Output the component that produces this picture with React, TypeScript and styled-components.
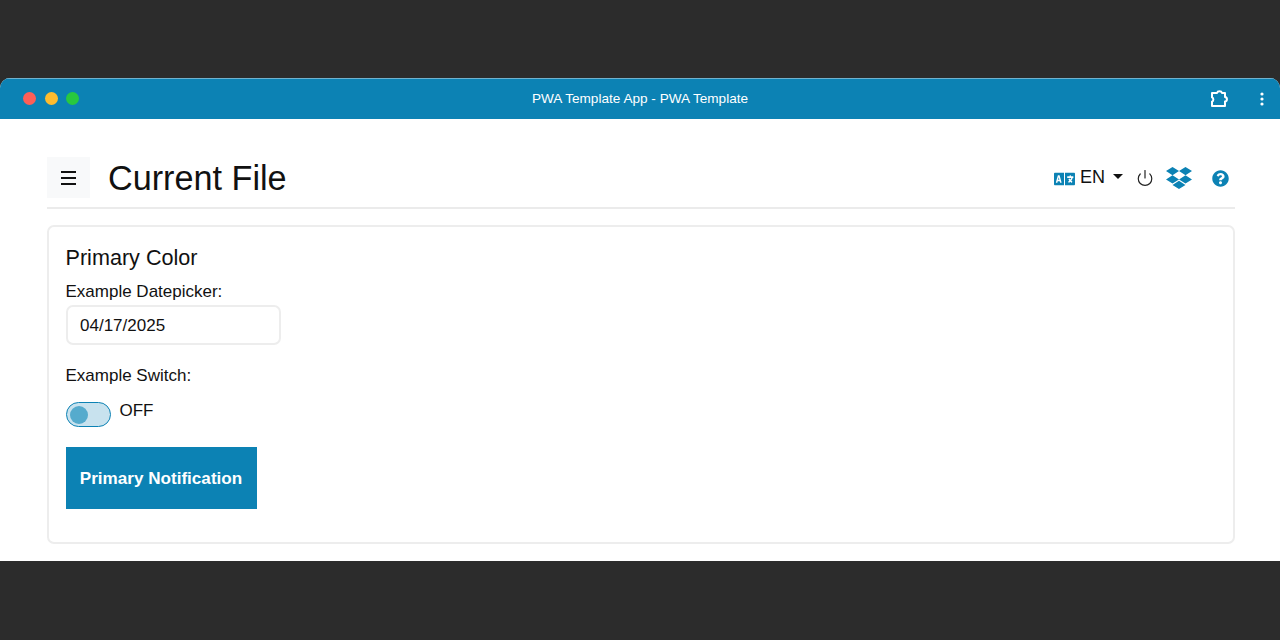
import styled, { createGlobalStyle } from "styled-components";
import { FaDropbox, FaLanguage, FaQuestionCircle } from "react-icons/fa";
import { Power } from "lucide-react";

const GlobalStyle = createGlobalStyle`
  html, body {
    margin: 0;
    padding: 0;
    height: 640px;
    overflow: hidden;
    background: #2c2c2c;
    font-family: "Liberation Sans", Arial, sans-serif;
    color: #111;
  }
  * { box-sizing: border-box; }
`;

const Page = styled.div`
  height: 640px;
  padding-top: 78px;
`;

const Window = styled.div`
  height: 483px;
  display: flex;
  flex-direction: column;
  background: #fff;
  border-radius: 10px 10px 0 0;
  overflow: hidden;
`;

const TitleBar = styled.div`
  height: 41px;
  flex: none;
  display: grid;
  grid-template-columns: 1fr auto 1fr;
  align-items: center;
  background: #0c82b4;
  border-top: 1px solid #6fb2cf;
  padding: 0 16px;
`;

const Lights = styled.div`
  display: flex;
  gap: 8.5px;
  margin: 0 0 2px 7px;
`;

const Light = styled.span<{ $color: string }>`
  width: 13px;
  height: 13px;
  border-radius: 50%;
  background: ${({ $color }) => $color};
`;

const WindowTitle = styled.div`
  color: #fff;
  font-size: 13.6px;
  margin-bottom: 2px;
`;

const BarActions = styled.div`
  justify-self: end;
  display: flex;
  align-items: center;
  gap: 31px;
  margin-bottom: 1px;
`;

const Content = styled.div`
  flex: 1;
  padding: 38px 45px 17px 47px;
  display: flex;
  flex-direction: column;
`;

const Header = styled.header`
  height: 52px;
  flex: none;
  display: flex;
  align-items: flex-start;
  border-bottom: 2px solid #ebebeb;
`;

const MenuButton = styled.button`
  width: 43px;
  height: 41px;
  border: none;
  background: #f8f9fa;
  display: flex;
  align-items: center;
  justify-content: center;
  padding: 0;
`;

const PageTitle = styled.h1`
  margin: 0 0 0 18px;
  font-size: 34.2px;
  line-height: 43px;
  font-weight: 400;
  flex: 1;
`;

const Tools = styled.div`
  display: flex;
  align-items: center;
  height: 41px;
  margin-right: 6px;
  color: #0c82b4;
`;

const LangIcon = styled(FaLanguage)`
  width: 21px;
  height: 20px;
  margin-top: 3px;
`;

const LangLabel = styled.span`
  font-size: 18px;
  color: #111;
  margin-left: 5px;
`;

const Caret = styled.span`
  width: 0;
  height: 0;
  margin: -2px 13px 0 8px;
  border-left: 5px solid transparent;
  border-right: 5px solid transparent;
  border-top: 5px solid #111;
`;

const PowerIcon = styled(Power)`
  color: #222;
`;

const DropboxIcon = styled(FaDropbox)`
  margin: 0 20px 0 12px;
`;

const HelpIcon = styled(FaQuestionCircle)`
  margin-top: 2px;
`;

const Card = styled.section`
  margin-top: 16px;
  flex: 1;
  border: 2px solid #ededed;
  border-radius: 7px;
  padding: 18px 16.5px 0;
`;

const CardTitle = styled.h2`
  margin: 0;
  font-size: 21.6px;
  line-height: 26px;
  font-weight: 400;
`;

const FieldLabel = styled.div`
  font-size: 17px;
  line-height: 20px;
  margin-top: 11px;
`;

const DateField = styled.div`
  width: 215px;
  height: 40px;
  margin-top: 3px;
  border: 2px solid #ededed;
  border-radius: 7px;
  padding: 0 12.5px;
  font-size: 17px;
  line-height: 38px;
`;

const SwitchLabel = styled(FieldLabel)`
  margin-top: 21px;
`;

const SwitchRow = styled.div`
  display: flex;
  align-items: flex-start;
  gap: 9px;
  margin-top: 16px;
  height: 25px;
`;

const SwitchTrack = styled.div`
  width: 45px;
  height: 25px;
  border: 1px solid #0c82b4;
  border-radius: 13px;
  background: #c8e2ee;
  display: flex;
  align-items: center;
  padding-left: 3px;
`;

const SwitchKnob = styled.span`
  width: 18px;
  height: 18px;
  border-radius: 50%;
  background: #55abcd;
`;

const SwitchState = styled.span`
  font-size: 17px;
  line-height: 18px;
`;

const PrimaryButton = styled.button`
  display: block;
  margin-top: 20px;
  width: 191px;
  height: 62px;
  border: none;
  background: #0c82b4;
  color: #fff;
  font-family: inherit;
  font-size: 17.1px;
  font-weight: 700;
  padding: 2px 0 0;
`;

export default function App() {
  return (
    <Page>
      <GlobalStyle />
      <Window>
        <TitleBar>
          <Lights>
            <Light $color="#fe5f57" />
            <Light $color="#febc2e" />
            <Light $color="#28c840" />
          </Lights>
          <WindowTitle>PWA Template App - PWA Template</WindowTitle>
          <BarActions>
            <svg width="20" height="20" viewBox="0 0 20 20" fill="none" stroke="#fff" strokeWidth="2" strokeLinejoin="round">
              <path d="M3 4H8C8.6 1.8 12.4 1.8 13 4H16V8C18.6 8.4 18.6 12.2 16 12.6V17H3V12.6C4.8 12 4.8 9 3 8.4Z" />
            </svg>
            <svg width="4" height="14" viewBox="0 0 4 14" fill="#fff">
              <circle cx="2" cy="2" r="1.6" />
              <circle cx="2" cy="7" r="1.6" />
              <circle cx="2" cy="12" r="1.6" />
            </svg>
          </BarActions>
        </TitleBar>
        <Content>
          <Header>
            <MenuButton aria-label="menu">
              <svg width="15" height="14" viewBox="0 0 15 14" stroke="#111" strokeWidth="2">
                <path d="M0 1h15M0 7h15M0 13h15" />
              </svg>
            </MenuButton>
            <PageTitle>Current File</PageTitle>
            <Tools>
              <LangIcon preserveAspectRatio="none" />
              <LangLabel>EN</LangLabel>
              <Caret />
              <PowerIcon size={18} strokeWidth={1.6} />
              <DropboxIcon size={26} />
              <HelpIcon size={17} />
            </Tools>
          </Header>
          <Card>
            <CardTitle>Primary Color</CardTitle>
            <FieldLabel>Example Datepicker:</FieldLabel>
            <DateField>04/17/2025</DateField>
            <SwitchLabel>Example Switch:</SwitchLabel>
            <SwitchRow>
              <SwitchTrack>
                <SwitchKnob />
              </SwitchTrack>
              <SwitchState>OFF</SwitchState>
            </SwitchRow>
            <PrimaryButton>Primary Notification</PrimaryButton>
          </Card>
        </Content>
      </Window>
    </Page>
  );
}
